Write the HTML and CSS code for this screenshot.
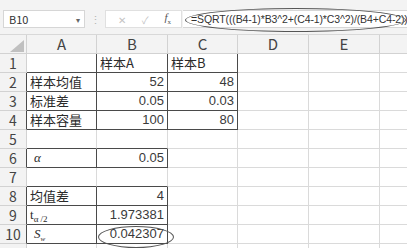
FILE: index.html
```html
<!DOCTYPE html>
<html lang="zh">
<head>
    <meta charset="UTF-8">
    <title>样本标准差</title>
    <link rel="stylesheet" href="styles.css">
</head>
<body>
    <!-- Barra de fórmulas -->
    <div class="toolbar">
        <div class="namebox">
            <span>B10</span>
            <span class="arrow">&#9662;</span>
        </div>
        <div class="dots">&#8942;</div>
        <div class="fx-buttons">
            <span class="btn">&#10005;</span>
            <span class="btn">&#10003;</span>
            <span class="btn fx"><i>f</i><sub>x</sub></span>
        </div>
        <div class="formula">
            <span>=SQRT(((B4-1)*B3^2+(C4-1)*C3^2)/(B4+C4-2))</span>
        </div>
    </div>
    <div class="oval oval-formula"></div>

    <!-- Hoja: dr = borde derecho oscuro, db = borde inferior oscuro -->
    <table class="sheet">
        <colgroup>
            <col class="c-head"><col class="c-70"><col class="c-71"><col class="c-70"><col class="c-71"><col class="c-71"><col class="c-rest">
        </colgroup>
        <tr class="head-row">
            <th class="corner"><div class="tri"></div></th>
            <th>A</th><th>B</th><th>C</th><th>D</th><th>E</th><th></th>
        </tr>
        <tr>
            <th>1</th>
            <td class="dr db"></td>
            <td class="dr db">样本A</td>
            <td class="dr db">样本B</td>
            <td></td><td></td><td></td>
        </tr>
        <tr>
            <th class="dr">2</th>
            <td class="dr db">样本均值</td>
            <td class="num dr db">52</td>
            <td class="num dr db">48</td>
            <td></td><td></td><td></td>
        </tr>
        <tr>
            <th class="dr">3</th>
            <td class="dr db">标准差</td>
            <td class="num dr db">0.05</td>
            <td class="num dr db">0.03</td>
            <td></td><td></td><td></td>
        </tr>
        <tr>
            <th class="dr">4</th>
            <td class="dr db">样本容量</td>
            <td class="num dr db">100</td>
            <td class="num dr db">80</td>
            <td></td><td></td><td></td>
        </tr>
        <tr>
            <th>5</th>
            <td class="db"></td><td class="db"></td><td></td><td></td><td></td><td></td>
        </tr>
        <tr>
            <th class="dr">6</th>
            <td class="dr db"><span class="greek">α</span></td>
            <td class="num dr db">0.05</td>
            <td></td><td></td><td></td><td></td>
        </tr>
        <tr>
            <th>7</th>
            <td class="db"></td><td class="db"></td><td></td><td></td><td></td><td></td>
        </tr>
        <tr>
            <th class="dr">8</th>
            <td class="dr db">均值差</td>
            <td class="num dr db">4</td>
            <td></td><td></td><td></td><td></td>
        </tr>
        <tr>
            <th class="dr">9</th>
            <td class="dr db"><span class="t-var">t<span class="sub-a">α /2</span></span></td>
            <td class="num dr db">1.973381</td>
            <td></td><td></td><td></td><td></td>
        </tr>
        <tr>
            <th class="dr">10</th>
            <td class="dr db"><span class="sw">S<span class="sub-w">w</span></span></td>
            <td class="num dr db">0.042307</td>
            <td></td><td></td><td></td><td></td>
        </tr>
        <tr>
            <th></th>
            <td></td><td></td><td></td><td></td><td></td><td></td>
        </tr>
    </table>

    <div class="oval oval-result"></div>
</body>
</html>
```

FILE: styles.css
```css
body {
    margin: 0;
    width: 407px;
    height: 248px;
    overflow: hidden;
    background: #ffffff;
    font-family: "Noto Sans CJK SC", "Liberation Sans", sans-serif;
    color: #2b2b2b;
    position: relative;
}

/* Barra superior */
.toolbar {
    height: 35px;
    background: #f3f3f3;
    display: flex;
    align-items: flex-start;
    box-sizing: border-box;
    padding-top: 10px;
    border-bottom: 1px solid #d8d8d8;
}

.namebox {
    width: 82px;
    height: 18px;
    margin-left: 3px;
    background: #fff;
    border: 1px solid #d6d6d6;
    display: flex;
    align-items: center;
    justify-content: space-between;
    padding: 0 4px 0 5px;
    box-sizing: border-box;
    font-size: 11px;
    color: #333;
}

.arrow {
    font-size: 8px;
    color: #666;
}

.dots {
    width: 20px;
    height: 18px;
    line-height: 18px;
    text-align: center;
    font-size: 11px;
    color: #b5b5b5;
}

.fx-buttons {
    width: 77px;
    height: 18px;
    background: #fff;
    border: 1px solid #e0e0e0;
    box-sizing: border-box;
    display: flex;
    align-items: center;
    justify-content: space-around;
    padding: 0 2px 0 4px;
}

.btn {
    font-size: 10px;
    color: #c4c4c4;
}

.btn.fx {
    color: #555;
    font-family: "Liberation Serif", serif;
    font-size: 11px;
}

.btn.fx sub {
    font-size: 7px;
}

.formula {
    flex: 1;
    height: 18px;
    margin-left: 1px;
    background: #fff;
    border-top: 1px solid #d6d6d6;
    border-bottom: 1px solid #d6d6d6;
    box-sizing: border-box;
    display: flex;
    align-items: center;
    padding-left: 8px;
    font-family: "Liberation Sans", sans-serif;
    font-size: 10.5px;
    letter-spacing: -0.12px;
    color: #333;
    white-space: nowrap;
    overflow: hidden;
}

/* Óvalos */
.oval {
    position: absolute;
    border: 1px solid #555;
    border-radius: 50%;
    pointer-events: none;
}

.oval-formula {
    left: 185px;
    top: 8px;
    width: 219px;
    height: 22px;
}

.oval-result {
    left: 98px;
    top: 226px;
    width: 74px;
    height: 20px;
}

/* Hoja de cálculo */
.sheet {
    border-collapse: separate;
    border-spacing: 0;
    table-layout: fixed;
    width: 420px;
}

.c-head { width: 27px; }
.c-70 { width: 70px; }
.c-71 { width: 71px; }
.c-rest { width: 40px; }

.sheet th,
.sheet td {
    height: 19px;
    padding: 0 3px;
    box-sizing: border-box;
    border: 0;
    border-right: 1px solid #dadada;
    border-bottom: 1px solid #dadada;
    white-space: nowrap;
    font-size: 13px;
    line-height: 18px;
    vertical-align: middle;
}

.sheet th {
    background: #f3f3f3;
    font-weight: normal;
    color: #444;
    font-size: 14px;
    text-align: center;
    padding: 0;
    border-color: #d2d2d2;
}

.head-row th {
    font-size: 15px;
}

.tri {
    width: 0;
    height: 0;
    border-left: 14px solid transparent;
    border-bottom: 12px solid #c0c0c0;
    margin: 3px 0 0 10px;
}

.num {
    text-align: right;
    font-family: "Liberation Sans", sans-serif;
    font-size: 13.5px;
    color: #3a3a3a;
}

/* Bordes oscuros */
.sheet .dr { border-right-color: #4a4a4a; }
.sheet .db { border-bottom-color: #4a4a4a; }

.greek,
.t-var,
.sw {
    display: inline-block;
    height: 18px;
    line-height: 18px;
    vertical-align: top;
    font-family: "Liberation Serif", serif;
    font-size: 13px;
}

.greek,
.sw {
    font-style: italic;
    padding-left: 4px;
}

.sub-a {
    font-size: 9px;
    position: relative;
    top: 3px;
}

.sub-w {
    font-size: 7px;
    position: relative;
    top: 3px;
}
```
